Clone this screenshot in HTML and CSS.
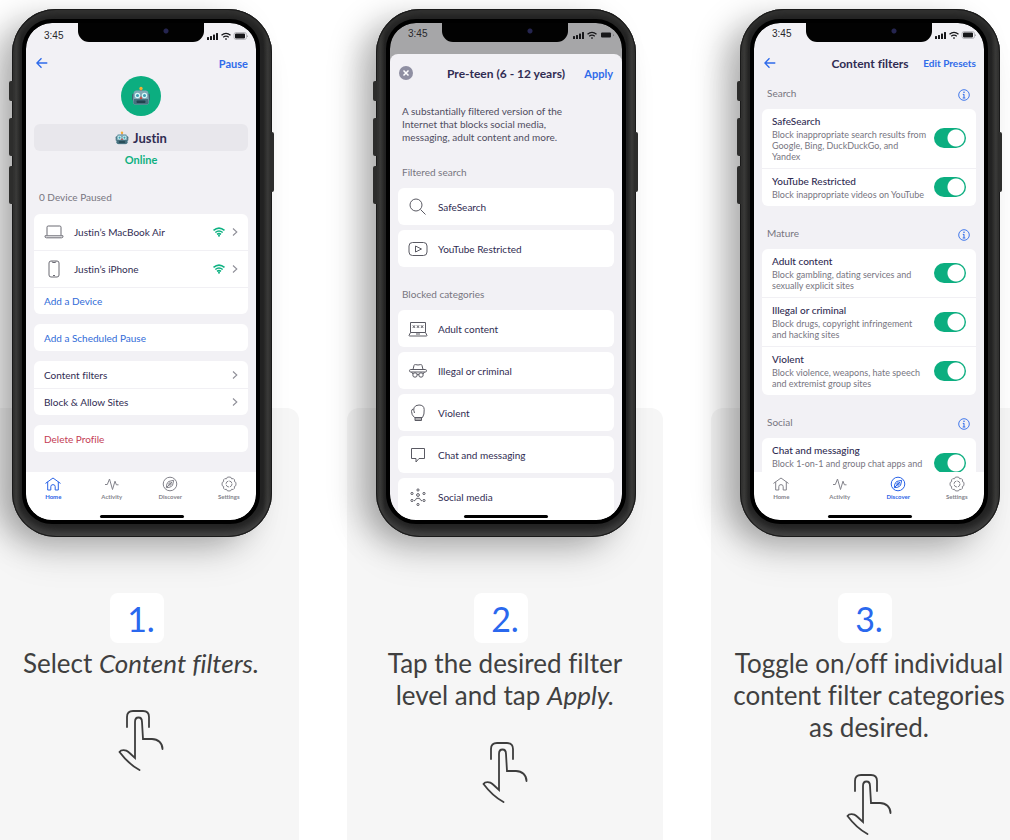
FILE: index.html
```html
<!DOCTYPE html>
<html lang="en">
<head>
<meta charset="utf-8">
<meta name="viewport" content="width=device-width, initial-scale=1">
<title>Content filters</title>
<link rel="stylesheet" href="styles.css">
</head>
<body>
<svg class="sprite" aria-hidden="true">
  <symbol id="signals" viewBox="0 0 42 12">
    <g fill="#17171a">
      <rect x="0" y="7" width="2" height="3" rx=".5"/><rect x="3" y="6" width="2" height="4" rx=".5"/><rect x="6" y="4.500" width="2" height="5.500" rx=".5"/><rect x="9" y="3" width="2" height="7" rx=".5"/>
      <rect x="28" y="3.500" width="10" height="5" rx="1"/><path d="M40.300 5v2.300q.9-1.100 0-2.300z"/>
    </g>
    <rect x="27" y="2.500" width="12.500" height="7" rx="2" fill="none" stroke="#a5a5aa" stroke-width=".7"/>
    <g fill="none" stroke="#17171a" stroke-width="1.300"><path d="M14.500 5.200q4.500-3.800 9 0M16.200 7.200q2.800-2.200 5.600 0"/></g>
    <path d="M17.800 8.700q1.200-.9 2.400 0L19 10.200z" fill="#17171a"/>
  </symbol>
  <symbol id="back" viewBox="0 0 12 12"><path d="M11.300 6H1M5.500 1.200L.9 6l4.600 4.800" fill="none" stroke="currentColor" stroke-width="1.300"/></symbol>
  <symbol id="robot" viewBox="0 0 20 20">
    <path d="M10 2v4" stroke="#d9483b" stroke-width="1.600"/><circle cx="10" cy="2.400" r="1.700" fill="#f2b134"/>
    <rect x="1" y="7.500" width="18" height="7" rx="1.500" fill="#3c6573"/>
    <path d="M5 4.500h10q2 0 2.400 2.500l.6 9q0 2.800-3 2.800H5q-3 0-3-2.800l.6-9Q3 4.500 5 4.500z" fill="#7fa9b5"/>
    <path d="M3 13h14l.7 3q0 2.500-2.700 2.500H5q-2.700 0-2.700-2.500z" fill="#47707e"/>
    <circle cx="6.500" cy="9.500" r="2.700" fill="#d9f6f7"/><circle cx="13.500" cy="9.500" r="2.700" fill="#d9f6f7"/>
    <circle cx="6.500" cy="9.500" r="1.500" fill="#3d9fb3"/><circle cx="13.500" cy="9.500" r="1.500" fill="#3d9fb3"/>
    <path d="M10 10l1.500 3h-3z" fill="#c8473e"/><rect x="5.500" y="14.500" width="9" height="2.400" rx="1" fill="#21434e"/>
  </symbol>
  <symbol id="laptop" viewBox="0 0 20 14"><path d="M3 10.500V2.200Q3 1 4.200 1h11.600Q17 1 17 2.200v8.300M1 10.800h18v.6q0 1.400-1.400 1.400H2.400Q1 12.800 1 11.400z" fill="none" stroke="currentColor"/></symbol>
  <symbol id="mobile" viewBox="0 0 12 18"><rect x="1" y="1" width="10" height="16" rx="2" fill="none" stroke="currentColor"/><path d="M4 1.500q0 1 1 1h2q1 0 1-1M5 15.500h2" fill="none" stroke="currentColor"/></symbol>
  <symbol id="wifi" viewBox="0 0 12 10"><g fill="none" stroke="#0fb283" stroke-width="1.600"><path d="M.5 3.400q5.500-4.600 11 0M2.300 5.500q3.700-3 7.400 0M4 7.400q2-1.500 4 0"/></g><circle cx="6" cy="8.800" r="1" fill="#0fb283"/></symbol>
  <symbol id="chevron" viewBox="0 0 6 10"><path d="M1 1.500L4.800 5 1 8.500" fill="none" stroke="#8f8f98" stroke-width="1.100"/></symbol>
  <symbol id="home" viewBox="0 0 16 14"><path d="M.8 6.200L8 1l7.200 5.200M2.700 5.200V13h3.100V9.700Q5.800 7.600 8 7.600t2.200 2.100V13h3.100V5.200" fill="none" stroke="currentColor" stroke-linejoin="round" stroke-linecap="round"/></symbol>
  <symbol id="pulse" viewBox="0 0 16 14"><path d="M1 7.500h2.300L5.500 2l3 10.500L11 4.200l1.400 3.600h2.100" fill="none" stroke="currentColor" stroke-linejoin="round"/></symbol>
  <symbol id="compass" viewBox="0 0 16 16"><g fill="none" stroke="currentColor"><circle cx="8" cy="8" r="6.800"/><path d="M11.700 4.300L10.500 9.500Q8.500 11.700 4.300 11.700q0-4.200 2.200-6.200z"/><path d="M5 11l5-5"/><circle cx="8" cy="8" r="1.200"/></g></symbol>
  <symbol id="gear" viewBox="0 0 16 16"><path d="M8 1l1.900.3.700 1.500 1.700-.2 1.300 1.300-.2 1.700 1.400.7L15 8l-.3 1.800-1.400.7.200 1.700-1.300 1.300-1.700-.2-.7 1.400L8 15l-1.800-.3-.7-1.400-1.700.2-1.300-1.300.2-1.700-1.400-.7L1 8l.3-1.700 1.400-.7-.2-1.700 1.300-1.300 1.700.2.700-1.500z" fill="none" stroke="currentColor" stroke-linejoin="round"/><circle cx="8" cy="8" r="3" fill="none" stroke="currentColor" stroke-dasharray="3.700 1"/></symbol>
  <symbol id="close" viewBox="0 0 14 14"><circle cx="7" cy="7" r="7" fill="#8f8fa2"/><path d="M4.500 4.500l5 5m0-5l-5 5" stroke="#fff" stroke-width="1.500"/></symbol>
  <symbol id="search" viewBox="0 0 20 20"><circle cx="8" cy="8" r="6" fill="none" stroke="currentColor"/><path d="M12.500 12.500l5 5" stroke="currentColor"/></symbol>
  <symbol id="video" viewBox="0 0 20 20"><rect x="1" y="3.500" width="18" height="13" rx="3.500" fill="none" stroke="currentColor"/><path d="M7.500 7v6l6-3z" fill="none" stroke="currentColor" stroke-linejoin="round"/></symbol>
  <symbol id="adult" viewBox="0 0 20 20"><path d="M2.500 13.500v-10h15v10M1 16.500l1.500-3h15l1.500 3q0 .5-.7.500H1.700q-.7 0-.7-.5zM8 15h4M4.800 6.300l2.200 2.600m0-2.600l-2.200 2.600M8.900 6.300l2.200 2.600m0-2.600l-2.200 2.600M13 6.300l2.200 2.600m0-2.600L13 8.900" fill="none" stroke="currentColor"/></symbol>
  <symbol id="spy" viewBox="0 0 20 20"><g fill="none" stroke="currentColor"><path d="M5 8.500l1-4q.4-1.300 1.500-.9 2.500.8 5 0 1.100-.4 1.500.9l1 4"/><rect x="1.500" y="8.500" width="17" height="2.500" rx="1.200"/><circle cx="7" cy="14" r="2.200"/><circle cx="13" cy="14" r="2.200"/><path d="M9 13.500q1-.7 2 0M3.500 11l1.500 2M16.500 11L15 13"/></g></symbol>
  <symbol id="glove" viewBox="0 0 20 20"><g fill="none" stroke="currentColor"><path d="M6.500 14.500Q3.500 12 3.500 8.500 3.500 6 5.500 6M6.500 10Q5.300 7 6 4.800 7.200 2 11 2q5 0 5.200 4.500.3 5-1.700 8h-8M7 14.500v3h6.500v-3M7 16h6.500"/></g></symbol>
  <symbol id="chat" viewBox="0 0 20 20"><path d="M3.500 3.500h13v10h-5.500L8 17v-3.500H3.500z" fill="none" stroke="currentColor" stroke-linejoin="round"/></symbol>
  <symbol id="social" viewBox="0 0 20 20"><g fill="none" stroke="currentColor"><circle cx="10" cy="8" r="1.400"/><path d="M6 14q2-1 2.500-2.700h3Q12 13 14 14"/><circle cx="10" cy="3" r="1.100"/><circle cx="10" cy="17.500" r="1.100"/><circle cx="4" cy="6.500" r="1.100"/><circle cx="16" cy="6.500" r="1.100"/><circle cx="4" cy="13.500" r="1.100"/><circle cx="16" cy="13.500" r="1.100"/></g></symbol>
  <symbol id="info" viewBox="0 0 12 12"><circle cx="6" cy="6" r="5.300" fill="none" stroke="currentColor" stroke-width=".9"/><path d="M6 5.200V9M4.800 5.400H6M4.700 9h2.600" stroke="currentColor"/><circle cx="6" cy="3.300" r=".8" fill="currentColor"/></symbol>
  <symbol id="tap" viewBox="0 0 46 63"><g fill="none" stroke="#3d3d3d" stroke-width="1.800" stroke-linecap="round"><path d="M9 18V8Q9 2 15 2H25Q31 2 31 8V18"/><path d="M21.500 61C14 57 6 49 1.500 43C3 40.500 8 40.500 10.500 43L17 49V13Q17 8.500 20.500 8.500Q24 8.500 24 13L25 30H34C40 30 44.500 34 44.500 40"/></g></symbol>
</svg>

<main class="steps">
  <section class="step">
    <div class="phone phone-narrow">
      <span class="key key-mute"></span><span class="key key-up"></span><span class="key key-down"></span><span class="key key-power"></span>
      <div class="screen">
        <span class="notch"></span>
        <div class="status status-low"><span>3:45</span><svg class="signals"><use href="#signals"/></svg></div>
        <div class="nav"><button class="link" aria-label="Back"><svg class="i12"><use href="#back"/></svg></button><button class="link">Pause</button></div>
        <div class="profile">
          <div class="avatar"><svg class="i20"><use href="#robot"/></svg></div>
          <button class="name"><svg class="i14"><use href="#robot"/></svg>Justin</button>
          <div class="online">Online</div>
        </div>
        <div class="scroll">
          <h2 class="label label-devices">0 Device Paused</h2>
          <div class="card">
            <a class="row device" href="#mac"><svg class="laptop"><use href="#laptop"/></svg><span class="grow">Justin’s MacBook Air</span><svg class="wifi"><use href="#wifi"/></svg><svg class="chev"><use href="#chevron"/></svg></a>
            <a class="row device" href="#iphone"><svg class="mobile"><use href="#mobile"/></svg><span class="grow">Justin’s iPhone</span><svg class="wifi"><use href="#wifi"/></svg><svg class="chev"><use href="#chevron"/></svg></a>
            <a class="row blue" href="#add">Add a Device</a>
          </div>
          <div class="card"><a class="row blue" href="#pause">Add a Scheduled Pause</a></div>
          <div class="card">
            <a class="row" href="#filters"><span class="grow">Content filters</span><svg class="chev"><use href="#chevron"/></svg></a>
            <a class="row" href="#sites"><span class="grow">Block &amp; Allow Sites</span><svg class="chev"><use href="#chevron"/></svg></a>
          </div>
          <div class="card"><a class="row red" href="#delete">Delete Profile</a></div>
        </div>
        <nav class="tabs">
          <a class="active" href="#home"><svg class="i16"><use href="#home"/></svg>Home</a>
          <a href="#activity"><svg class="i16"><use href="#pulse"/></svg>Activity</a>
          <a href="#discover"><svg class="i16"><use href="#compass"/></svg>Discover</a>
          <a href="#settings"><svg class="i16"><use href="#gear"/></svg>Settings</a>
        </nav>
        <span class="bar"></span>
      </div>
    </div>
    <div class="number">1.</div>
    <p class="caption">Select <em>Content filters.</em></p>
    <svg class="tap"><use href="#tap"/></svg>
  </section>

  <section class="step">
    <div class="phone">
      <span class="key key-mute"></span><span class="key key-up"></span><span class="key key-down"></span><span class="key key-power"></span>
      <div class="screen dim">
        <span class="notch"></span>
        <div class="status"><span>3:45</span><svg class="signals"><use href="#signals"/></svg></div>
        <div class="sheet">
          <div class="nav nav-sheet"><button class="link" aria-label="Close"><svg class="i14"><use href="#close"/></svg></button><h1>Pre-teen (6 - 12 years)</h1><button class="link">Apply</button></div>
          <p class="about">A substantially filtered version of the<br>Internet that blocks social media,<br>messaging, adult content and more.</p>
          <h2 class="label">Filtered search</h2>
          <ul class="list">
            <li><svg class="i20"><use href="#search"/></svg>SafeSearch</li>
            <li><svg class="i20"><use href="#video"/></svg>YouTube Restricted</li>
          </ul>
          <h2 class="label label-blocked">Blocked categories</h2>
          <ul class="list list-end">
            <li><svg class="i20"><use href="#adult"/></svg>Adult content</li>
            <li><svg class="i20"><use href="#spy"/></svg>Illegal or criminal</li>
            <li><svg class="i20"><use href="#glove"/></svg>Violent</li>
            <li><svg class="i20"><use href="#chat"/></svg>Chat and messaging</li>
            <li><svg class="i20"><use href="#social"/></svg>Social media</li>
          </ul>
        </div>
        <span class="bar"></span>
      </div>
    </div>
    <div class="number">2.</div>
    <p class="caption">Tap the desired filter<br>level and tap <em>Apply.</em></p>
    <svg class="tap"><use href="#tap"/></svg>
  </section>

  <section class="step">
    <div class="phone phone-narrow">
      <span class="key key-mute"></span><span class="key key-up"></span><span class="key key-down"></span><span class="key key-power"></span>
      <div class="screen">
        <span class="notch"></span>
        <div class="status"><span>3:45</span><svg class="signals"><use href="#signals"/></svg></div>
        <div class="nav nav-filters"><button class="link" aria-label="Back"><svg class="i12"><use href="#back"/></svg></button><h1>Content filters</h1><button class="link">Edit Presets</button></div>
        <div class="scroll">
          <div class="head"><h2>Search</h2><button class="link" aria-label="About search filters"><svg class="i12"><use href="#info"/></svg></button></div>
          <div class="group">
            <label class="filter"><span class="text"><b>SafeSearch</b><small>Block inappropriate search results from<br>Google, Bing, DuckDuckGo, and<br>Yandex</small></span><input type="checkbox" class="toggle" checked></label>
            <label class="filter"><span class="text"><b>YouTube Restricted</b><small>Block inappropriate videos on YouTube</small></span><input type="checkbox" class="toggle" checked></label>
          </div>
          <div class="head"><h2>Mature</h2><button class="link" aria-label="About mature filters"><svg class="i12"><use href="#info"/></svg></button></div>
          <div class="group">
            <label class="filter"><span class="text"><b>Adult content</b><small>Block gambling, dating services and<br>sexually explicit sites</small></span><input type="checkbox" class="toggle" checked></label>
            <label class="filter"><span class="text"><b>Illegal or criminal</b><small>Block drugs, copyright infringement<br>and hacking sites</small></span><input type="checkbox" class="toggle" checked></label>
            <label class="filter"><span class="text"><b>Violent</b><small>Block violence, weapons, hate speech<br>and extremist group sites</small></span><input type="checkbox" class="toggle" checked></label>
          </div>
          <div class="head"><h2>Social</h2><button class="link" aria-label="About social filters"><svg class="i12"><use href="#info"/></svg></button></div>
          <div class="group">
            <label class="filter filter-last"><span class="text"><b>Chat and messaging</b><small>Block 1-on-1 and group chat apps and</small></span><input type="checkbox" class="toggle" checked></label>
          </div>
        </div>
        <nav class="tabs">
          <a href="#home"><svg class="i16"><use href="#home"/></svg>Home</a>
          <a href="#activity"><svg class="i16"><use href="#pulse"/></svg>Activity</a>
          <a class="active" href="#discover"><svg class="i16"><use href="#compass"/></svg>Discover</a>
          <a href="#settings"><svg class="i16"><use href="#gear"/></svg>Settings</a>
        </nav>
        <span class="bar"></span>
      </div>
    </div>
    <div class="number">3.</div>
    <p class="caption">Toggle on/off individual<br>content filter categories<br>as desired.</p>
    <svg class="tap"><use href="#tap"/></svg>
  </section>
</main>
</body>
</html>
```
FILE: styles.css
```css
* { box-sizing: border-box; }
body {
  margin: 0;
  overflow: hidden;
  background: #fff;
  color: #302c52;
  font-family: Lato, "Liberation Sans", sans-serif;
  font-variant-ligatures: none;
}
h1, h2, p, ul { margin: 0; padding: 0; font-weight: 400; }
button { padding: 0; border: 0; background: none; font: inherit; color: inherit; }
a { color: inherit; text-decoration: none; }
svg { display: block; flex: none; }
.sprite { position: absolute; width: 0; height: 0; }
.i12 { width: 12px; height: 12px; }
.i14 { width: 14px; height: 14px; }
.i16 { width: 16px; height: 16px; }
.i20 { width: 20px; height: 20px; }

.steps {
  display: grid;
  grid-template-columns: repeat(3, 1fr);
  gap: 48px;
  margin: 0 -17px;
  padding-top: 408px;
}
.step {
  display: flex;
  flex-direction: column;
  align-items: center;
  min-height: calc(100vh - 408px);
  border-radius: 12px 12px 0 0;
  background: #f6f6f6;
}

/* phone */
.phone {
  position: relative;
  width: 260px;
  margin-top: -399px;
  margin-left: 2px;
  padding: 14px;
  border-radius: 44px;
  background: linear-gradient(90deg, #1c1c1b, #3b3b39 4px, #222 9px, #222 251px, #3b3b39 256px, #1c1c1b);
  box-shadow:
    inset 0 0 0 1px #1a1a1a,
    inset 0 5px 6px #343433,
    inset 0 -6px 7px #444,
    -20px 6px 32px -4px rgba(0, 0, 0, .26),
    -10px 24px 40px -12px rgba(0, 0, 0, .18);
}
.phone-narrow { padding-right: 16px; }
.key { position: absolute; left: -3px; width: 4px; border-radius: 2px 0 0 2px; background: #2d2d2c; }
.key-mute { top: 72px; height: 20px; }
.key-up { top: 109px; height: 38px; }
.key-down { top: 157px; height: 38px; }
.key-power { top: 123px; right: -2px; left: auto; height: 60px; border-radius: 0 2px 2px 0; }
.screen {
  position: relative;
  display: flex;
  flex-direction: column;
  height: 497px;
  margin-bottom: 3px;
  overflow: hidden;
  border-radius: 26px;
  background: #f2f1f5;
  outline: 4px solid #000;
}
.dim { background: #a6a6a8; }
.notch {
  position: absolute;
  top: 0;
  left: 52px;
  width: 126px;
  height: 19px;
  border-radius: 0 0 11px 11px;
  background: radial-gradient(circle at 88px 8px, #252550 2px, transparent 3px), #020202;
}
.bar { position: absolute; bottom: 2px; left: 74px; width: 84px; height: 3px; border-radius: 2px; background: #000; }
.status {
  display: flex;
  flex: none;
  justify-content: space-between;
  height: 27px;
  padding: 4px 7px 0 18px;
  color: #27272b;
  font: 10px/14px "Liberation Sans", sans-serif;
}
.status-low { padding-top: 6px; }
.signals { width: 42px; height: 12px; margin-top: 2px; }
.status-low .signals { margin-top: 1px; }
.nav {
  display: grid;
  flex: none;
  grid-template-columns: 1fr auto 1fr;
  align-items: center;
  height: 26px;
  padding: 0 8px 0 10px;
}
.nav h1 { grid-column: 2; font-size: 12px; font-weight: 700; }
.nav .link { justify-self: start; font-size: 11px; font-weight: 700; }
.nav .link:last-child { grid-column: 3; justify-self: end; }
.nav-filters .link { font-size: 10px; }
.link { color: #2f6bea; }

/* profile screen */
.profile { display: flex; flex-direction: column; align-items: center; padding: 0 8px; }
.avatar { display: grid; place-items: center; width: 40px; height: 40px; border-radius: 50%; background: #0cae80; }
.name {
  display: flex;
  align-items: center;
  justify-content: center;
  gap: 4px;
  align-self: stretch;
  height: 27px;
  margin-top: 8px;
  border-radius: 6px;
  background: #e8e7ec;
  font-size: 13px;
  font-weight: 700;
}
.online { margin-top: 2px; color: #0fb07f; font-size: 11px; font-weight: 700; line-height: 14px; }
.scroll { flex: 1; min-height: 0; padding: 0 8px; overflow: hidden; }
.label { color: #77757f; font-size: 10px; line-height: 14px; }
.label-devices { margin: 23px 5px 10px; }
.card { margin-bottom: 10px; border-radius: 6px; background: #fff; }
.row {
  display: flex;
  align-items: center;
  min-height: 27px;
  padding: 0 10px;
  font-size: 10px;
  line-height: 14px;
}
.row + .row { border-top: 1px solid #f1f0f4; }
.device { height: 36px; }
.device + .device { height: 37px; }
.grow { flex: 1; }
.blue { color: #2f6bd8; }
.red { color: #c43d55; }
.laptop { width: 20px; height: 14px; margin-right: 10px; color: #6a6a73; }
.mobile { width: 12px; height: 18px; margin: 0 14px 0 4px; color: #6a6a73; }
.wifi { width: 12px; height: 10px; margin-right: 7px; }
.chev { width: 6px; height: 10px; }
.tabs {
  display: grid;
  flex: none;
  grid-template-columns: repeat(4, 1fr);
  height: 48px;
  margin: 0 -2px;
  padding-top: 4px;
  background: #fff;
  color: #83838b;
  font-size: 6px;
  font-weight: 700;
  line-height: 10px;
}
.tabs a { display: flex; flex-direction: column; align-items: center; }
.tabs .active { color: #2a63e6; }

/* preset sheet */
.sheet {
  flex: 1;
  margin-top: 4px;
  padding: 0 8px;
  border-radius: 8px 8px 0 0;
  background: #f2f1f5;
}
.nav-sheet { height: 38px; padding: 0 1px; }
.about { margin: 13px 4px 21px; color: #4f4c60; font-size: 10px; line-height: 13px; }
.sheet .label { margin: 0 4px 9px; }
.sheet .label-blocked { margin: 20px 4px 9px; }
.list { display: grid; gap: 5px; list-style: none; }
.list li {
  display: flex;
  align-items: center;
  gap: 10px;
  height: 37px;
  padding: 0 10px;
  border-radius: 6px;
  background: #fff;
  font-size: 10px;
}
.list-end li:last-child { height: 44px; padding-bottom: 7px; }
.list svg { color: #5a5a63; }

/* filter list */
.head {
  display: flex;
  justify-content: space-between;
  align-items: flex-start;
  height: 33px;
  padding: 10px 6px 0 5px;
}
.head h2 { color: #77757f; font-size: 10px; line-height: 14px; }
.head .link { margin-top: 3px; }
.group { margin-bottom: 10px; border-radius: 6px; background: #fff; }
.filter {
  display: flex;
  justify-content: space-between;
  align-items: center;
  padding: 5px 10px 6px;
}
.filter + .filter { border-top: 1px solid #f1f0f4; }
.filter-last { min-height: 50px; }
.filter-last .text { align-self: flex-start; }
.text { white-space: nowrap; }
.text b { display: block; font-size: 10px; font-weight: 500; line-height: 15px; }
.text small { display: block; color: #77757f; font-size: 9px; line-height: 11px; }
.toggle {
  flex: none;
  appearance: none;
  width: 32px;
  height: 20px;
  margin: 0;
  border-radius: 10px;
  background: radial-gradient(circle at 22px 10px, #fff 8px, #0cae80 9px);
}

/* captions */
.number {
  width: 54px;
  height: 50px;
  margin: 56px 8px 4px 0;
  padding-left: 8px;
  border-radius: 8px;
  background: #fff;
  color: #2a68ee;
  font-size: 34px;
  line-height: 52px;
  text-align: center;
}
.caption { color: #404040; font-size: 26px; line-height: 32px; text-align: center; white-space: nowrap; }
.tap { width: 46px; height: 63px; margin-top: 30px; }
```
